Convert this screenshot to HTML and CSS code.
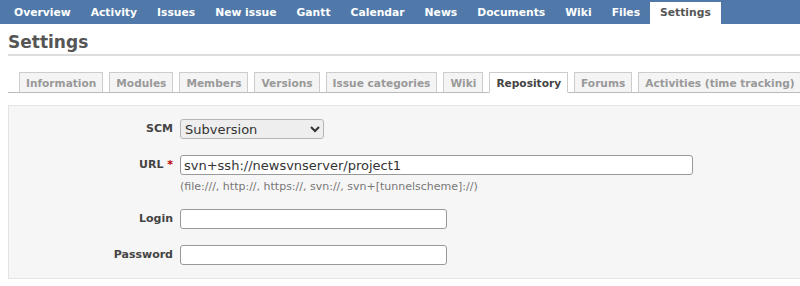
FILE: index.html
```html
<!DOCTYPE html>
<html lang="en">
<head>
  <meta charset="UTF-8" />
  <title>Settings - Project</title>
  <link rel="stylesheet" href="styles.css">
</head>
<body>
  <nav class="main-menu">
    <ul>
      <li><a href="#">Overview</a></li>
      <li><a href="#">Activity</a></li>
      <li><a href="#">Issues</a></li>
      <li><a href="#">New issue</a></li>
      <li><a href="#">Gantt</a></li>
      <li><a href="#">Calendar</a></li>
      <li><a href="#">News</a></li>
      <li><a href="#">Documents</a></li>
      <li><a href="#">Wiki</a></li>
      <li><a href="#">Files</a></li>
      <li><a class="selected" href="#">Settings</a></li>
    </ul>
  </nav>

  <div class="content">
    <h2>Settings</h2>

    <div class="tabs">
      <ul>
        <li><a href="#">Information</a></li>
        <li><a href="#">Modules</a></li>
        <li><a href="#">Members</a></li>
        <li><a href="#">Versions</a></li>
        <li><a href="#">Issue categories</a></li>
        <li><a href="#">Wiki</a></li>
        <li><a class="selected" href="#">Repository</a></li>
        <li><a href="#">Forums</a></li>
        <li><a href="#">Activities (time tracking)</a></li>
      </ul>
    </div>

    <div class="box">
      <div class="row">
        <label>SCM</label>
        <div class="field">
          <select class="scm">
            <option>Subversion</option>
          </select>
        </div>
      </div>
      <div class="row">
        <label>URL <span class="required">*</span></label>
        <div class="field">
          <input class="url" type="text" value="svn+ssh://newsvnserver/project1">
          <em class="info">(file:///, http://, https://, svn://, svn+[tunnelscheme]://)</em>
        </div>
      </div>
      <div class="row">
        <label>Login</label>
        <div class="field">
          <input class="short" type="text" value="">
        </div>
      </div>
      <div class="row">
        <label>Password</label>
        <div class="field">
          <input class="short" type="password" value="">
        </div>
      </div>
    </div>
  </div>
</body>
</html>
```

FILE: styles.css
```css
body {
  margin: 0;
  font-family: "DejaVu Sans", Verdana, sans-serif;
  font-size: 12px;
  color: #333;
  background: #fff;
}

.main-menu {
  background: #5079a9;
  height: 24px;
  padding-left: 4px;
}

.main-menu ul {
  list-style: none;
  margin: 0;
  padding: 0;
  display: flex;
  height: 24px;
  align-items: flex-end;
}

.main-menu li a {
  display: block;
  color: #fff;
  text-decoration: none;
  font-size: 10.75px;
  font-weight: bold;
  padding: 4px 10px 5px 10px;
  line-height: 12px;
  white-space: nowrap;
}

.main-menu li a.selected {
  background: #fff;
  color: #555;
  padding-top: 5px;
}

.content {
  padding: 0 0 0 8px;
}

h2 {
  margin: 0;
  padding: 9px 0 2px 0;
  font-size: 17px;
  font-weight: bold;
  color: #555;
  border-bottom: 2px solid #ddd;
  line-height: 19px;
}

.tabs {
  margin-top: 16px;
  border-bottom: 1px solid #bbb;
}

.tabs ul {
  list-style: none;
  margin: 0 0 -1px 11px;
  padding: 0;
  display: flex;
  gap: 6px;
}

.tabs li a {
  display: block;
  font-size: 10.6px;
  font-weight: bold;
  color: #999;
  text-decoration: none;
  background: #f4f4f4;
  border: 1px solid #ccc;
  border-bottom: 1px solid #bbb;
  padding: 4px 6px 3px 6px;
  line-height: 12px;
  white-space: nowrap;
}

.tabs li a.selected {
  background: #fff;
  color: #444;
  border-bottom: 1px solid #fff;
}

.box {
  margin-top: 12px;
  background: #f6f6f6;
  border: 1px solid #e4e4e4;
  border-right: none;
  padding: 13px 0 13px 0;
}

.row {
  display: flex;
  align-items: flex-start;
  margin-bottom: 16px;
}

.row:last-child {
  margin-bottom: 0;
}

.row label {
  width: 164px;
  text-align: right;
  font-size: 11px;
  font-weight: bold;
  color: #444;
  padding-top: 3px;
  flex-shrink: 0;
}

.required {
  color: #bb0000;
}

.field {
  margin-left: 7px;
  display: flex;
  flex-direction: column;
}

select.scm {
  width: 144px;
  height: 20px;
  font-family: "DejaVu Sans", Verdana, sans-serif;
  font-size: 13px;
  color: #333;
  border: 1px solid #b5b5b5;
  border-radius: 3px;
  background: #eee;
}

input {
  height: 20px;
  box-sizing: border-box;
  border: 1px solid #999;
  border-radius: 3px;
  background: #fff;
  font-family: "DejaVu Sans", Verdana, sans-serif;
  font-size: 13px;
  color: #333;
  padding: 0 3px;
}

input.url {
  width: 513px;
}

input.short {
  width: 267px;
}

.info {
  font-style: normal;
  font-size: 11px;
  color: #777;
  margin-top: 5px;
}
```
